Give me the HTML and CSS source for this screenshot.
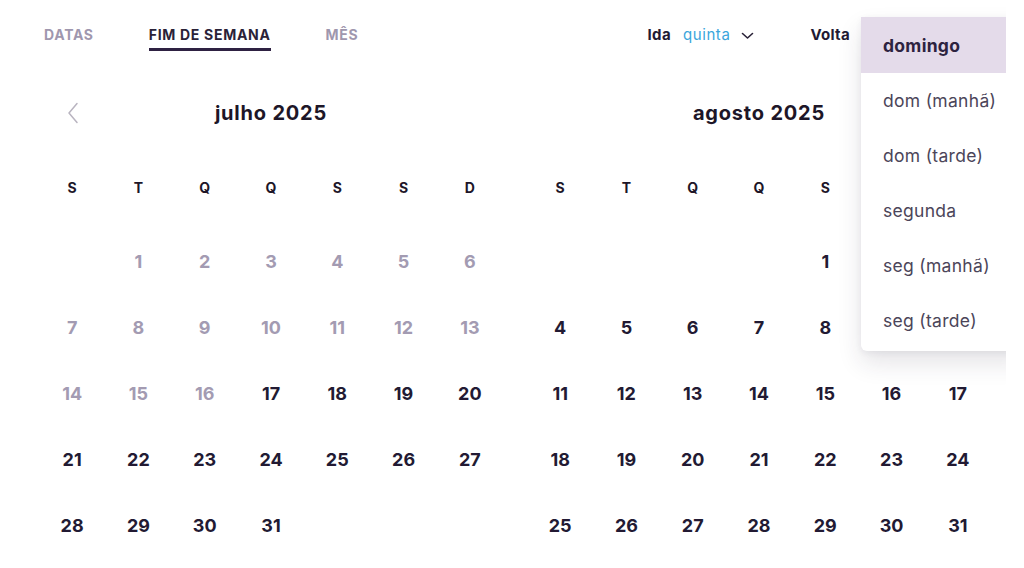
FILE: index.html
```html
<!DOCTYPE html>
<html lang="pt">
<head>
<meta charset="utf-8">
<link rel="stylesheet" href="styles.css">
</head>
<body>
<div class="page">
  <header class="topbar">
    <nav class="tabs">
      <span class="tab">DATAS</span>
      <span class="tab active">FIM DE SEMANA</span>
      <span class="tab">MÊS</span>
    </nav>
    <div class="selectors">
      <div class="sel"><span class="sel-label">Ida</span><span class="sel-value">quinta</span>
        <svg class="caret" width="13" height="8" viewBox="0 0 13 8"><path d="M1.5 1.5 L6.5 6 L11.5 1.5" fill="none" stroke="#2a2238" stroke-width="1.6" stroke-linecap="round" stroke-linejoin="round"/></svg>
      </div>
      <div class="sel volta"><span class="sel-label">Volta</span></div>
    </div>
  </header>

  <main class="months">
    <section class="month">
      <div class="month-head">
        <svg class="prev" width="12" height="22" viewBox="0 0 12 22"><path d="M10 1.5 L2 11 L10 20.5" fill="none" stroke="#b9b4c0" stroke-width="1.5" stroke-linecap="round" stroke-linejoin="round"/></svg>
        <h2 class="month-title">julho 2025</h2>
        <span></span>
      </div>
      <div class="weekdays"><span>S</span><span>T</span><span>Q</span><span>Q</span><span>S</span><span>S</span><span>D</span></div>
      <div class="days">
        <span></span><span class="past">1</span><span class="past">2</span><span class="past">3</span><span class="past">4</span><span class="past">5</span><span class="past">6</span>
        <span class="past">7</span><span class="past">8</span><span class="past">9</span><span class="past">10</span><span class="past">11</span><span class="past">12</span><span class="past">13</span>
        <span class="past">14</span><span class="past">15</span><span class="past">16</span><span>17</span><span>18</span><span>19</span><span>20</span>
        <span>21</span><span>22</span><span>23</span><span>24</span><span>25</span><span>26</span><span>27</span>
        <span>28</span><span>29</span><span>30</span><span>31</span><span></span><span></span><span></span>
      </div>
    </section>

    <section class="month">
      <div class="month-head">
        <span></span>
        <h2 class="month-title">agosto 2025</h2>
        <span></span>
      </div>
      <div class="weekdays"><span>S</span><span>T</span><span>Q</span><span>Q</span><span>S</span><span>S</span><span>D</span></div>
      <div class="days">
        <span></span><span></span><span></span><span></span><span>1</span><span>2</span><span>3</span>
        <span>4</span><span>5</span><span>6</span><span>7</span><span>8</span><span>9</span><span>10</span>
        <span>11</span><span>12</span><span>13</span><span>14</span><span>15</span><span>16</span><span>17</span>
        <span>18</span><span>19</span><span>20</span><span>21</span><span>22</span><span>23</span><span>24</span>
        <span>25</span><span>26</span><span>27</span><span>28</span><span>29</span><span>30</span><span>31</span>
      </div>
    </section>
  </main>

  <ul class="dropdown">
    <li class="opt selected">domingo</li>
    <li class="opt">dom (manhã)</li>
    <li class="opt">dom (tarde)</li>
    <li class="opt">segunda</li>
    <li class="opt">seg (manhã)</li>
    <li class="opt">seg (tarde)</li>
  </ul>
</div>
</body>
</html>
```

FILE: styles.css
```css
* { box-sizing: border-box; }
html, body { margin: 0; padding: 0; background: #fff; }
body {
  font-family: "Inter", "Open Sans", "DejaVu Sans", sans-serif;
  color: #221a33;
  width: 1024px;
  height: 568px;
  overflow: hidden;
}
.page {
  position: relative;
  width: 1006px;
  height: 568px;
  overflow: hidden;
}
.topbar {
  height: 70px;
  display: flex;
  justify-content: space-between;
  align-items: flex-start;
  padding: 0 0 0 44px;
}
.tabs {
  display: flex;
  gap: 55px;
  padding-top: 26px;
}
.tab {
  font-size: 14px;
  font-weight: 700;
  letter-spacing: 0.7px;
  color: #9f97ae;
  padding-bottom: 4px;
  border-bottom: 3px solid transparent;
  line-height: 18px;
}
.tab.active {
  color: #2a2238;
  border-bottom-color: #2e2142;
}
.selectors {
  display: flex;
  gap: 56px;
  padding-top: 26px;
  margin-right: 156px;
}
.sel {
  display: flex;
  align-items: center;
  gap: 12px;
  font-size: 15px;
  line-height: 18px;
  letter-spacing: 0.3px;
}
.sel-label { font-weight: 700; color: #221a33; }
.sel-value { color: #3aa6dc; letter-spacing: 0.6px; }
.caret { margin-left: -1px; margin-top: 1px; }

.months {
  display: flex;
  gap: 24px;
  padding-left: 39px;
}
.month { width: 464px; }
.month-head {
  height: 86px;
  display: grid;
  grid-template-columns: 66px 1fr 66px;
  align-items: center;
}
.prev { justify-self: center; margin-left: 2px; margin-top: -1px; }
.month-title {
  margin: 0;
  text-align: center;
  font-size: 20px;
  font-weight: 700;
  letter-spacing: 0.8px;
  color: #1d1628;
}
.weekdays {
  display: grid;
  grid-template-columns: repeat(7, 1fr);
  height: 62px;
  align-items: center;
  text-align: center;
  font-size: 14px;
  font-weight: 700;
  color: #1d1628;
  margin-bottom: 10px;
}
.days {
  display: grid;
  grid-template-columns: repeat(7, 1fr);
  grid-auto-rows: 66px;
  align-items: center;
  text-align: center;
  font-size: 18px;
  font-weight: 700;
  color: #221a33;
}
.days .past { color: #a39bb2; }

.dropdown {
  position: absolute;
  left: 861px;
  top: 17px;
  width: 170px;
  margin: 0;
  padding: 0 0 3px;
  list-style: none;
  background: #fff;
  border-radius: 0 0 6px 6px;
  box-shadow: 0 12px 24px rgba(40, 30, 60, 0.12), 0 2px 6px rgba(40, 30, 60, 0.06);
}
.opt {
  height: 55px;
  display: flex;
  align-items: center;
  padding-left: 22px;
  font-size: 17.5px;
  letter-spacing: 0.3px;
  color: #4b4559;
}
.opt.selected {
  height: 56px;
  background: #e4dbea;
  font-weight: 700;
  color: #2d2340;
}
```
